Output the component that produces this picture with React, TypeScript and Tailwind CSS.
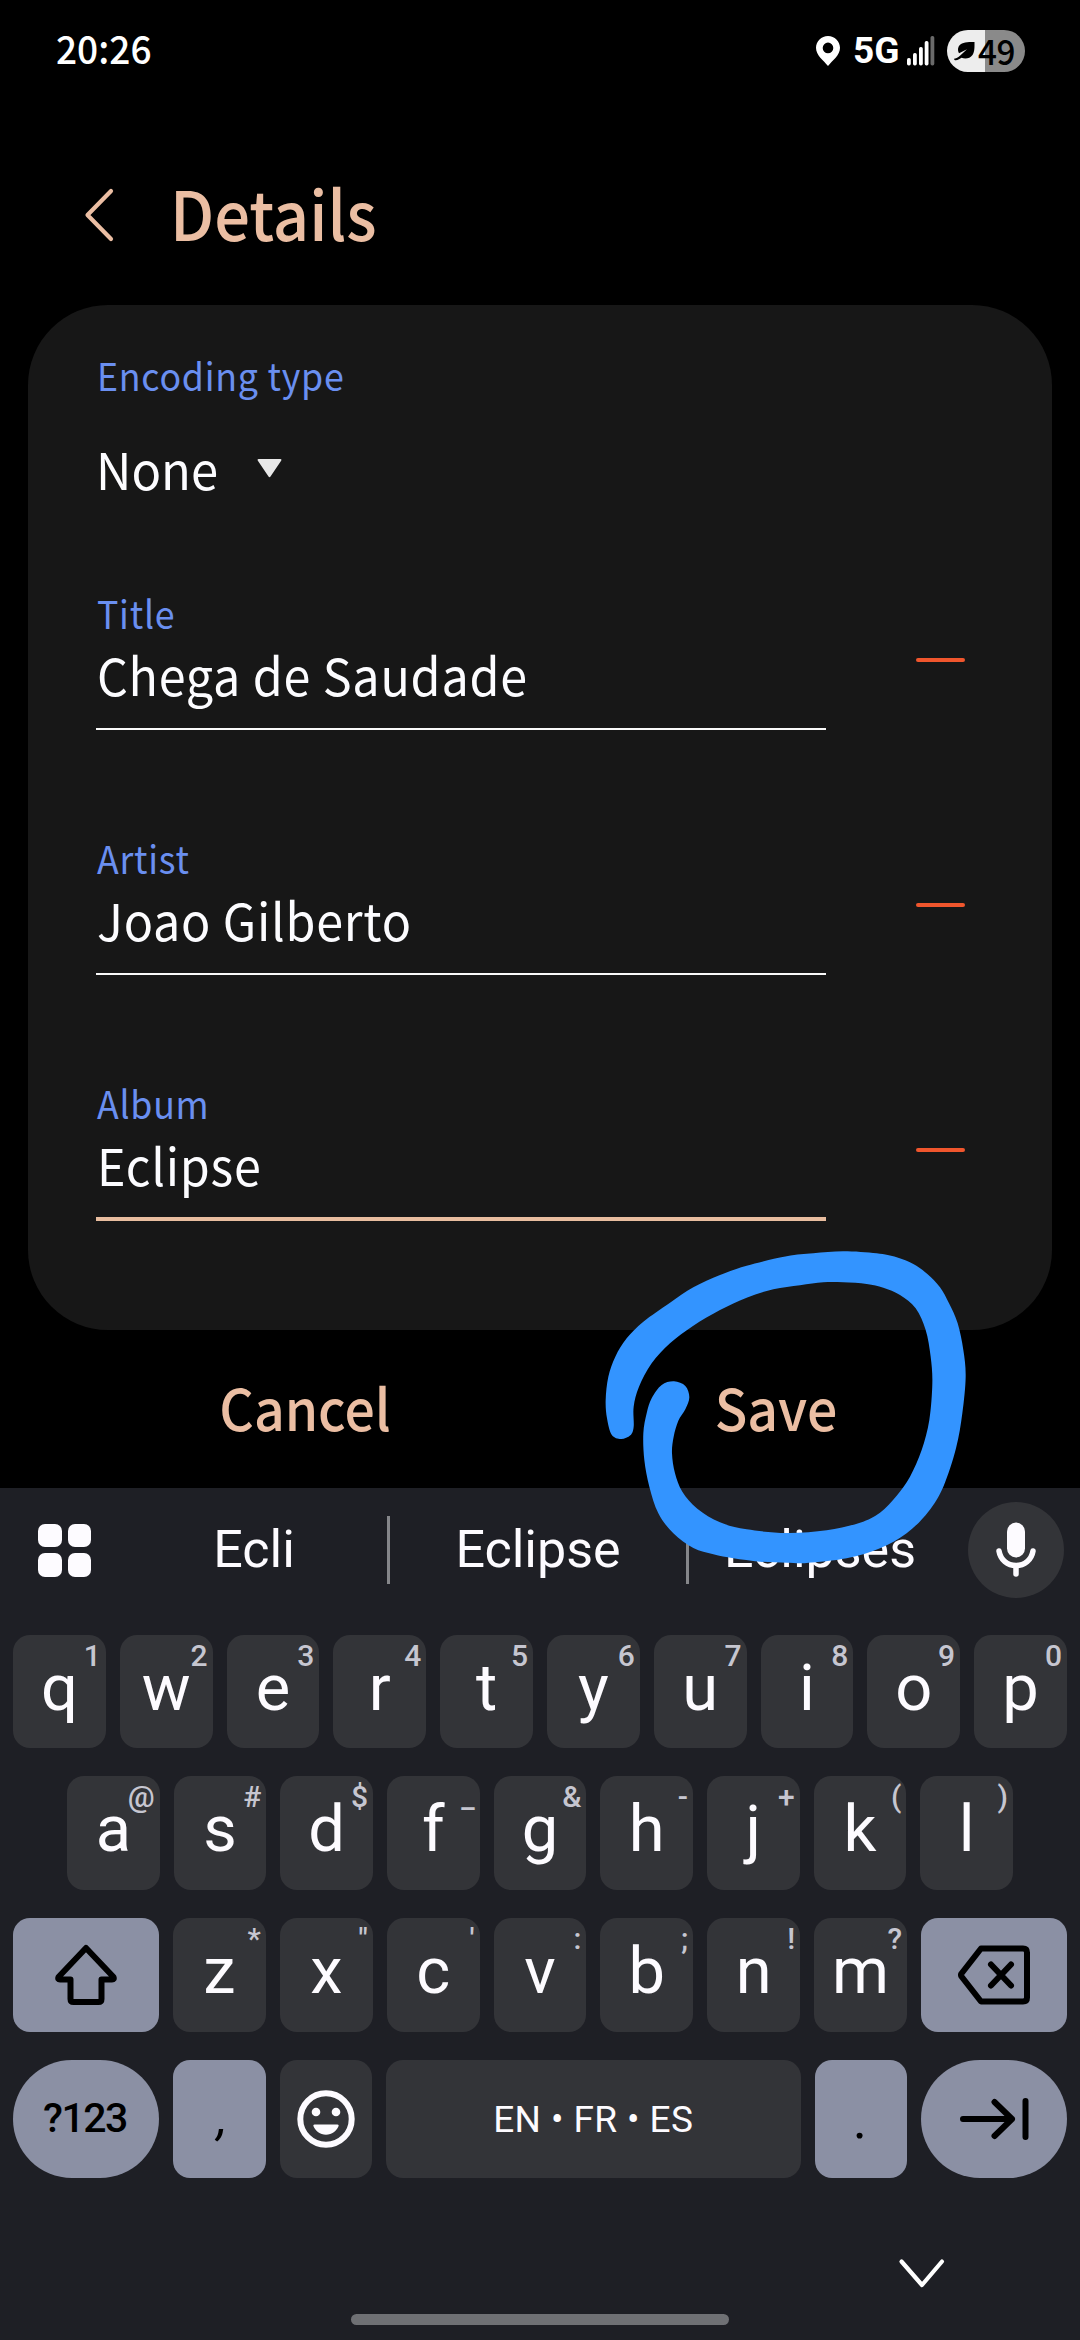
import type { ReactNode } from "react";

const SAMSUNG = "[font-family:'Noto_Sans_CJK_SC',sans-serif]";
const GOOGLE = "[font-family:Roboto,sans-serif]";

type KeyDef = { label: string; hint?: string };

const ROW_1: KeyDef[] = [
  { label: "q", hint: "1" },
  { label: "w", hint: "2" },
  { label: "e", hint: "3" },
  { label: "r", hint: "4" },
  { label: "t", hint: "5" },
  { label: "y", hint: "6" },
  { label: "u", hint: "7" },
  { label: "i", hint: "8" },
  { label: "o", hint: "9" },
  { label: "p", hint: "0" },
];

const ROW_2: KeyDef[] = [
  { label: "a", hint: "@" },
  { label: "s", hint: "#" },
  { label: "d", hint: "$" },
  { label: "f", hint: "_" },
  { label: "g", hint: "&" },
  { label: "h", hint: "-" },
  { label: "j", hint: "+" },
  { label: "k", hint: "(" },
  { label: "l", hint: ")" },
];

const ROW_3: KeyDef[] = [
  { label: "z", hint: "*" },
  { label: "x", hint: '"' },
  { label: "c", hint: "'" },
  { label: "v", hint: ":" },
  { label: "b", hint: ";" },
  { label: "n", hint: "!" },
  { label: "m", hint: "?" },
];

// Outline of the marker stroke, clockwise from the left end.
const SCRIBBLE: [number, number][] = [
  [137, 600], [145, 530], [166, 470], [200, 415], [250, 365], [330, 308], [400, 262], [480, 225],
  [560, 197], [680, 169], [760, 160], [850, 154], [950, 160], [1010, 172], [1060, 192], [1102, 222],
  [1140, 262], [1167, 310], [1193, 370], [1210, 450], [1217, 530], [1207, 640], [1188, 745],
  [1150, 860], [1105, 935], [1040, 1000], [960, 1045], [860, 1075], [740, 1089], [680, 1088],
  [600, 1085], [520, 1075], [460, 1063], [400, 1044], [340, 1000], [295, 940], [268, 860],
  [253, 780], [250, 700], [260, 640], [275, 595], [305, 555], [342, 544], [376, 558], [388, 592],
  [376, 628], [355, 662], [341, 710], [336, 760], [345, 820], [367, 875], [412, 926], [480, 967],
  [560, 988], [680, 999], [800, 991], [900, 968], [960, 938], [1010, 887], [1050, 830], [1085, 750],
  [1108, 660], [1117, 550], [1112, 470], [1097, 390], [1067, 325], [1020, 285], [970, 263],
  [920, 252], [850, 247], [790, 247], [720, 256], [640, 268], [560, 293], [480, 330], [400, 377],
  [330, 430], [275, 490], [237, 560], [221, 620], [221, 680], [211, 706], [183, 717], [155, 704],
  [141, 655],
];

function smoothPath(pts: [number, number][]) {
  const n = pts.length;
  let d = `M${pts[0][0]} ${pts[0][1]}`;
  for (let i = 0; i < n; i++) {
    const p0 = pts[(i - 1 + n) % n];
    const p1 = pts[i];
    const p2 = pts[(i + 1) % n];
    const p3 = pts[(i + 2) % n];
    d += `C${p1[0] + (p2[0] - p0[0]) / 6} ${p1[1] + (p2[1] - p0[1]) / 6} ${p2[0] - (p3[0] - p1[0]) / 6} ${p2[1] - (p3[1] - p1[1]) / 6} ${p2[0]} ${p2[1]}`;
  }
  return d + "Z";
}

function StatusBar() {
  return (
    <header className="flex h-[102px] items-center pl-[56px] pr-[55px] text-white">
      <span
        className={`${SAMSUNG} mb-[8px] inline-block origin-left scale-x-[0.95] text-[39px] font-medium leading-[60px]`}
      >
        20:26
      </span>
      <div className="ml-auto flex items-center">
        <svg width="24" height="30" viewBox="0 0 24 30">
          <path
            fill="#fff"
            fillRule="evenodd"
            d="M12 0C5.4 0 0 5.2 0 11.8c0 7.6 7.6 12.7 12 18.2 4.4-5.5 12-10.6 12-18.2C24 5.2 18.6 0 12 0Zm0 6.6a5.3 5.3 0 1 1 0 10.6 5.3 5.3 0 0 1 0-10.6Z"
          />
        </svg>
        <span className={`${GOOGLE} ml-[13px] w-[45px] text-[37px] font-bold leading-[60px]`}>5G</span>
        <svg className="ml-[9px]" width="28" height="30" viewBox="0 0 28 30">
          <rect x="0" y="22" width="3.8" height="7.5" rx="1.7" fill="#fff" />
          <rect x="6" y="17" width="3.8" height="12.5" rx="1.7" fill="#fff" />
          <rect x="12" y="11" width="3.8" height="18.5" rx="1.7" fill="#fff" />
          <rect x="17.7" y="5" width="3.8" height="24.5" rx="1.7" fill="#fff" />
          <rect x="23.5" y="0" width="3.8" height="29.5" rx="1.7" fill="#6a6a6a" />
        </svg>
        <div className="ml-[12px] flex h-[42px] w-[78px] items-center rounded-full bg-[linear-gradient(90deg,#ededed_38px,#8a8a8a_38px)] pl-[7px]">
          <svg width="22" height="20" viewBox="0 0 22 20">
            <path
              fill="#000"
              d="M20.5 1C13 .6 7 1.5 4.8 5.3 3.4 8 4 10.5 5 12.3L13 8.2 6.5 14.3C3.5 17 1.5 17.5 0 17.8c.2 1 .9 1.5 1.7 1.5 2.3-.2 4.3-1.4 5.800-2.500 4 1.600 8.500.7 11-2.800 2.300-3.400 2-8 2-13Z"
            />
          </svg>
          <span
            className={`${SAMSUNG} mb-[3px] ml-[2px] inline-block origin-left scale-x-[0.95] text-[35px] font-medium leading-[42px] tracking-[-0.5px] text-black`}
          >
            49
          </span>
        </div>
      </div>
    </header>
  );
}

function Label({ children }: { children: ReactNode }) {
  return (
    <div
      className={`${SAMSUNG} origin-left scale-x-[0.94] whitespace-nowrap pl-px text-[38px] leading-[50px] tracking-[0.8px] text-[#6a8ff0]`}
    >
      {children}
    </div>
  );
}

function Field({ label, value, active = false }: { label: string; value: string; active?: boolean }) {
  return (
    <div className="flex h-[245px] items-start">
      <div className="w-[730px]">
        <Label>{label}</Label>
        <div
          className={`${SAMSUNG} mt-[4px] origin-left scale-x-[0.95] whitespace-nowrap pl-px text-[51px] leading-[64px] tracking-[0.8px] text-[#fcfcff]`}
        >
          {value}
        </div>
        <div className={active ? "mt-[21px] h-[4px] bg-[#e8bd9f]" : "mt-[22px] h-[2px] bg-[#fafafa]"} />
      </div>
      <div className="ml-[90px] mt-[70px] h-[4px] w-[49px] rounded-full bg-[#f0562d]" />
    </div>
  );
}

function Key({ label, hint }: KeyDef) {
  return (
    <div
      className={`${GOOGLE} relative h-full min-w-0 flex-1 rounded-[17px] bg-[#333438] text-center text-[65px] leading-[106px] text-[#fdfbff]`}
    >
      {label}
      {hint && (
        <span className="absolute right-[5px] top-0 text-[30px] font-medium leading-[42px] text-[#c6c6d0]">
          {hint}
        </span>
      )}
    </div>
  );
}

function SuggestionBar() {
  return (
    <div className={`${GOOGLE} flex h-[124px] items-center text-[52px] leading-none text-[#fdfbff]`}>
      <div className="ml-[38px] grid w-[53px] grid-cols-2 gap-[6px]">
        {[0, 1, 2, 3].map((i) => (
          <div key={i} className="h-[23.5px] rounded-[7px] bg-[#fdfbff]" />
        ))}
      </div>
      <div className="ml-[30px] w-[266px] text-center">Ecli</div>
      <div className="h-[68px] w-[3px] bg-[#85868a]" />
      <div className="w-[296px] text-center">Eclipse</div>
      <div className="h-[68px] w-[3px] bg-[#85868a]" />
      <div className="w-[262px] text-center">Eclipses</div>
      <div className="ml-[17px] flex size-[96px] items-center justify-center rounded-full bg-[#333438]">
        <svg width="40" height="56" viewBox="0 0 40 56" fill="none">
          <rect x="11" y="0.5" width="18" height="35" rx="9" fill="#fdfbff" />
          <path d="M3 29c1.5 9 8.5 14.5 17 14.5S35.5 38 37 29" stroke="#fdfbff" strokeWidth="5.5" strokeLinecap="round" />
          <path d="M20 44v8" stroke="#fdfbff" strokeWidth="5.5" strokeLinecap="round" />
        </svg>
      </div>
    </div>
  );
}

function Keyboard() {
  return (
    <section className="flex h-[852px] flex-col bg-[#1e1f25]">
      <SuggestionBar />
      <div className="mt-[23px] flex h-[113px] gap-[14px] px-[13px]">
        {ROW_1.map((k) => (
          <Key key={k.label} {...k} />
        ))}
      </div>
      <div className="mt-[28px] flex h-[114px] gap-[14px] px-[67px]">
        {ROW_2.map((k) => (
          <Key key={k.label} {...k} />
        ))}
      </div>
      <div className="mt-[28px] flex h-[114px] gap-[14px] px-[13px]">
        <div className="flex w-[146px] items-center justify-center rounded-[17px] bg-[#8b90a4]">
          <svg width="64" height="62" viewBox="0 0 64 62" fill="none" stroke="#000" strokeWidth="6" strokeLinejoin="round">
            <path d="M32 4 59.5 33Q60.5 35.5 58 35.5H47.5V55Q47.5 58 44.5 58H19.5Q16.5 58 16.5 55V35.5H6Q3.5 35.5 4.5 33Z" />
          </svg>
        </div>
        {ROW_3.map((k) => (
          <Key key={k.label} {...k} />
        ))}
        <div className="flex w-[146px] items-center justify-center rounded-[17px] bg-[#8b90a4]">
          <svg width="74" height="62" viewBox="0 0 74 62" fill="none" stroke="#000" strokeWidth="6" strokeLinecap="round" strokeLinejoin="round">
            <path d="M24 4.5H66Q70 4.5 70 8.5V53.5Q70 57.5 66 57.5H24L4.500 32.5Q3.5 31 4.5 29.5Z" />
            <path d="M34 20.5 54 41.5M54 20.5 34 41.5" />
          </svg>
        </div>
      </div>
      <div className={`${GOOGLE} mt-[28px] flex h-[118px] gap-[14px] px-[13px]`}>
        <div className="w-[146px] rounded-full bg-[#8b90a4] pr-[2px] text-center text-[41px] font-medium leading-[116px] tracking-[-1.5px] text-black">
          ?123
        </div>
        <div className="w-[92.5px] rounded-[17px] bg-[#8b90a4] pl-[6px] text-center text-[50px] italic leading-[114px] text-black">
          ,
        </div>
        <div className="flex w-[92.5px] items-center justify-center rounded-[17px] bg-[#333438]">
          <svg width="58" height="58" viewBox="0 0 58 58" fill="none">
            <circle cx="29" cy="29" r="25.7" stroke="#fdfbff" strokeWidth="6" />
            <circle cx="19" cy="22" r="4.3" fill="#fdfbff" />
            <circle cx="39" cy="22" r="4.3" fill="#fdfbff" />
            <path d="M17.5 34.5H40.5Q42.3 34.5 41.5 36.3C39.5 41 35 44.7 29 44.7S18.500 41 16.5 36.3Q15.7 34.5 17.5 34.5Z" fill="#fdfbff" />
          </svg>
        </div>
        <div className="flex-1 rounded-[17px] bg-[#333438] text-center text-[37px] leading-[120px] tracking-[0.4px] text-[#fdfbff]">
          EN • FR • ES
        </div>
        <div className="w-[92.5px] rounded-[17px] bg-[#8b90a4] pr-[2px] text-center text-[54px] leading-[120px] text-black">
          .
        </div>
        <div className="flex w-[146px] items-center justify-center rounded-full bg-[#8b90a4]">
          <svg width="70" height="44" viewBox="0 0 70 44" fill="none" stroke="#000" strokeWidth="6" strokeLinecap="round" strokeLinejoin="round">
            <path d="M4 22H53M35.5 5 53 22 35.5 39M66.5 4V40" />
          </svg>
        </div>
      </div>
      <div className="mt-[80px] flex justify-end pr-[133px]">
        <svg width="50" height="30" viewBox="0 0 50 30" fill="none" stroke="#fff" strokeWidth="4.2" strokeLinecap="round" strokeLinejoin="round">
          <path d="M4.5 3.5 25 27 45 3.5" />
        </svg>
      </div>
      <div className="mx-auto mt-[26px] h-[11px] w-[378px] rounded-full bg-[#6f7074]" />
    </section>
  );
}

export default function App() {
  return (
    <div className="relative flex h-[2340px] w-[1080px] flex-col overflow-hidden bg-black">
      <StatusBar />

      {/* Title bar */}
      <div className="flex h-[203px] items-center pl-[84px] pt-[22px]">
        <svg width="30" height="54" viewBox="0 0 30 54" fill="none" stroke="#ebbea3" strokeWidth="4.2" strokeLinecap="round" strokeLinejoin="round">
          <path d="M27 3 3.5 27 27 51" />
        </svg>
        <h1
          className={`${SAMSUNG} mb-[5px] ml-[56px] origin-left scale-x-[0.93] text-[68px] font-medium leading-[80px] text-[#ebbea3]`}
        >
          Details
        </h1>
      </div>

      <main className="mx-[28px] h-[1025px] rounded-[80px] bg-[#171717] pl-[68px] pt-[45px]">
        <Label>Encoding type</Label>
        <div className="mb-[88px] mt-[36px] flex h-[64px]">
          <span
            className={`${SAMSUNG} inline-block origin-left scale-x-[0.96] text-[51px] leading-[64px] text-[#fcfcff]`}
          >
            None
          </span>
          <svg className="ml-[34px] mt-[23px]" width="25" height="19" viewBox="0 0 25 19">
            <path d="M1.5 0H23.5Q25 0 24.3 1.5L13.5 17.5Q12.5 19 11.5 17.5L.7 1.5Q0 0 1.5 0Z" fill="#e8e8e8" />
          </svg>
        </div>
        <Field label="Title" value="Chega de Saudade" />
        <Field label="Artist" value="Joao Gilberto" />
        <Field label="Album" value="Eclipse" active />
      </main>

      <div
        className={`${SAMSUNG} flex h-[158px] pt-[36px] text-center text-[57px] font-medium leading-[80px] text-[#ebbea3]`}
      >
        <div className="ml-[70px] w-[470px] scale-x-[0.94]">Cancel</div>
        <div className="w-[472px] scale-x-[0.94]">Save</div>
      </div>

      <Keyboard />

      {/* Hand-drawn marker ring around Save */}
      <svg className="absolute left-[560px] top-[1200px]" width="520" height="420" viewBox="0 0 1560 1260">
        <path d={smoothPath(SCRIBBLE)} fill="#3394ff" />
      </svg>
    </div>
  );
}
